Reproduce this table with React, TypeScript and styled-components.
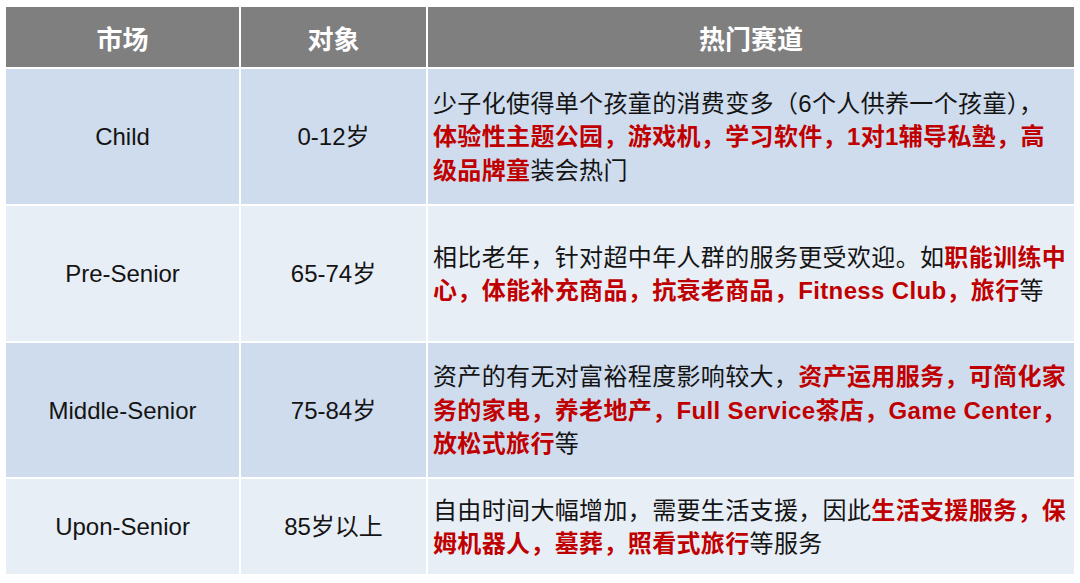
import React from "react";
import styled, { createGlobalStyle } from "styled-components";

const GlobalStyle = createGlobalStyle`
  html, body {
    margin: 0;
    padding: 0;
    background: #ffffff;
  }
  body {
    font-family: "Liberation Sans", "Noto Sans CJK SC", sans-serif;
  }
`;

type Seg = { t: string; hot?: boolean };

type Row = {
  market: string;
  target: string;
  lines: Seg[][];
};

const rows: Row[] = [
  {
    market: "Child",
    target: "0-12岁",
    lines: [
      [{ t: "少子化使得单个孩童的消费变多（6个人供养一个孩童），" }],
      [{ t: "体验性主题公园，游戏机，学习软件，1对1辅导私塾，高", hot: true }],
      [{ t: "级品牌童", hot: true }, { t: "装会热门" }],
    ],
  },
  {
    market: "Pre-Senior",
    target: "65-74岁",
    lines: [
      [{ t: "相比老年，针对超中年人群的服务更受欢迎。如" }, { t: "职能训练中", hot: true }],
      [{ t: "心，体能补充商品，抗衰老商品，Fitness Club，旅行", hot: true }, { t: "等" }],
    ],
  },
  {
    market: "Middle-Senior",
    target: "75-84岁",
    lines: [
      [{ t: "资产的有无对富裕程度影响较大，" }, { t: "资产运用服务，可简化家", hot: true }],
      [{ t: "务的家电，养老地产，Full Service茶店，Game Center，", hot: true }],
      [{ t: "放松式旅行", hot: true }, { t: "等" }],
    ],
  },
  {
    market: "Upon-Senior",
    target: "85岁以上",
    lines: [
      [{ t: "自由时间大幅增加，需要生活支援，因此" }, { t: "生活支援服务，保", hot: true }],
      [{ t: "姆机器人，墓葬，照看式旅行", hot: true }, { t: "等服务" }],
    ],
  },
];

const Page = styled.div`
  padding: 7px 6px 9px 6px;
`;

const Table = styled.div`
  display: grid;
  grid-template-columns: 233px 185px 1fr;
  grid-template-rows: 60px 135px 135px 134px 95px;
  gap: 2px;
  background: #ffffff;
`;

const HeadCell = styled.div`
  background: #7f7f7f;
  color: #ffffff;
  font-weight: bold;
  font-size: 26px;
  display: flex;
  align-items: center;
  justify-content: center;
`;

const Cell = styled.div<{ $alt: boolean; $left?: boolean }>`
  background: ${(p) => (p.$alt ? "#e8eef6" : "#cfdcee")};
  color: #141414;
  font-size: 24px;
  line-height: 33.5px;
  letter-spacing: ${(p) => (p.$left ? "0.35px" : "0")};
  display: flex;
  flex-direction: column;
  justify-content: center;
  align-items: ${(p) => (p.$left ? "flex-start" : "center")};
  padding: ${(p) => (p.$left ? "0 5px" : "0")};
  padding-top: 1px;
`;

const Line = styled.div`
  white-space: nowrap;
`;

const Hot = styled.span`
  color: #c00000;
  font-weight: bold;
`;

export default function App() {
  return (
    <Page>
      <GlobalStyle />
      <Table>
        <HeadCell>市场</HeadCell>
        <HeadCell>对象</HeadCell>
        <HeadCell>热门赛道</HeadCell>
        {rows.map((r, i) => (
          <React.Fragment key={r.market}>
            <Cell $alt={i % 2 === 1}>{r.market}</Cell>
            <Cell $alt={i % 2 === 1}>{r.target}</Cell>
            <Cell $alt={i % 2 === 1} $left>
              {r.lines.map((segs, j) => (
                <Line key={j}>
                  {segs.map((s, k) =>
                    s.hot ? <Hot key={k}>{s.t}</Hot> : <span key={k}>{s.t}</span>
                  )}
                </Line>
              ))}
            </Cell>
          </React.Fragment>
        ))}
      </Table>
    </Page>
  );
}
